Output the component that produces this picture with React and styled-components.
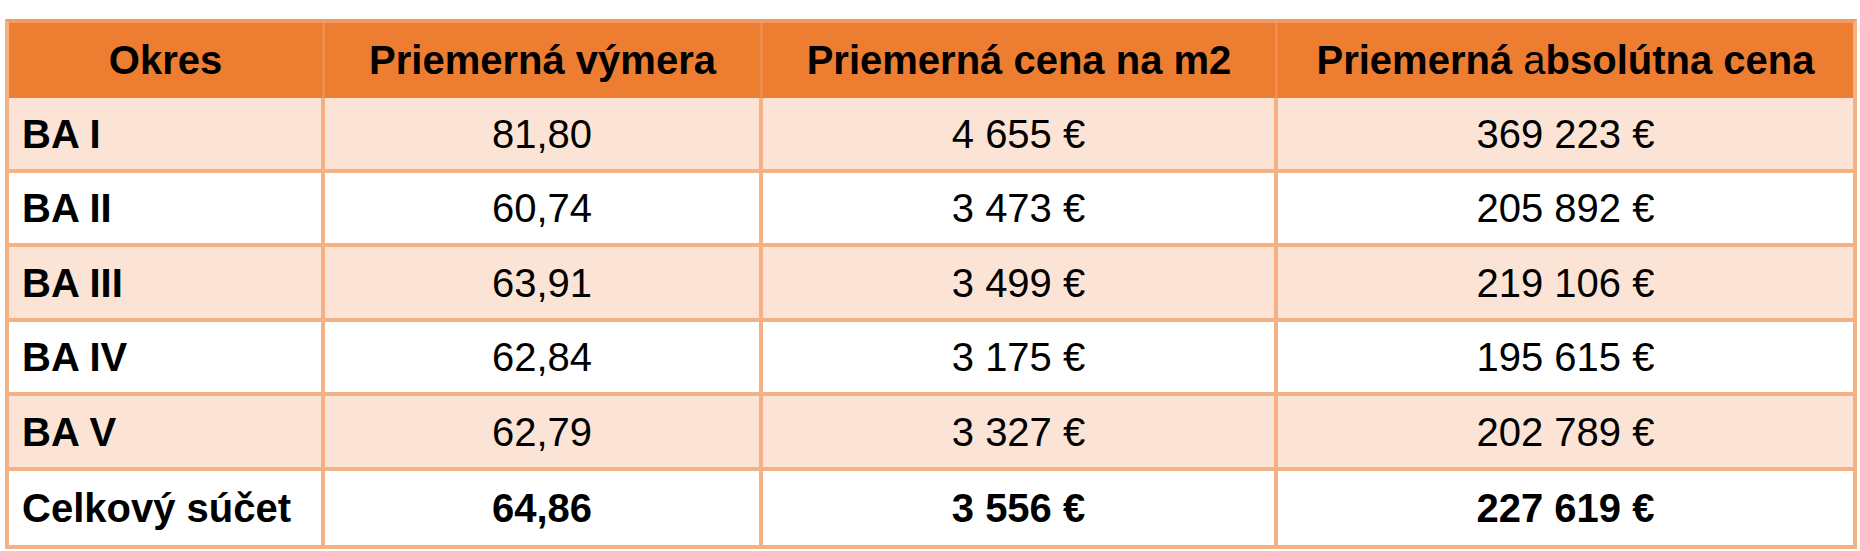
import React from "react";
import styled, { createGlobalStyle } from "styled-components";

const GlobalStyle = createGlobalStyle`
  html, body {
    margin: 0;
    padding: 0;
    background: #fff;
  }
  body {
    font-family: "Liberation Sans", Arial, sans-serif;
    color: #000;
  }
`;

const Page = styled.div`
  padding: 19px 0 0 5px;
`;

const Table = styled.table`
  width: 1852px;
  table-layout: fixed;
  border-collapse: separate;
  border-spacing: 0;
  border: 4px solid #f4b183;
  border-top-color: #f19a62;
  font-size: 40px;
`;

const Col = styled.col`
  width: ${props => props.w}px;
`;

const HeadCell = styled.th`
  height: 75px;
  padding: 0;
  background: #ed7d31;
  font-weight: bold;
  text-align: center;
  vertical-align: middle;
  border-right: 3px solid #f08c4c;
  &:last-child {
    border-right: none;
  }
`;

const Light = styled.span`
  font-weight: normal;
`;

const Row = styled.tr`
  background: ${props => (props.shaded ? "#fbe4d5" : "#fff")};
  font-weight: ${props => (props.total ? "bold" : "normal")};
`;

const Cell = styled.td`
  box-sizing: border-box;
  height: 74.5px;
  padding: 2px 0 0 0;
  text-align: center;
  vertical-align: middle;
  border-right: 4px solid #f4b183;
  border-bottom: 4px solid #f4b183;
  &:last-child {
    border-right: none;
  }
  tr:last-child > & {
    border-bottom: none;
  }
`;

const NameCell = styled(Cell)`
  text-align: left;
  padding-left: 13px;
  font-weight: bold;
`;

const rows = [
  ["BA I", "81,80", "4 655 €", "369 223 €"],
  ["BA II", "60,74", "3 473 €", "205 892 €"],
  ["BA III", "63,91", "3 499 €", "219 106 €"],
  ["BA IV", "62,84", "3 175 €", "195 615 €"],
  ["BA V", "62,79", "3 327 €", "202 789 €"],
];

const total = ["Celkový súčet", "64,86", "3 556 €", "227 619 €"];

export default function App() {
  return (
    <Page>
      <GlobalStyle />
      <Table>
        <colgroup>
          <Col w={316} />
          <Col w={438} />
          <Col w={515} />
          <Col w={575} />
        </colgroup>
        <thead>
          <tr>
            <HeadCell>Okres</HeadCell>
            <HeadCell>Priemerná výmera</HeadCell>
            <HeadCell>Priemerná cena na m2</HeadCell>
            <HeadCell>
              Priemerná <Light>a</Light>bsolútna cena
            </HeadCell>
          </tr>
        </thead>
        <tbody>
          {rows.map((r, i) => (
            <Row key={r[0]} shaded={i % 2 === 0}>
              <NameCell>{r[0]}</NameCell>
              <Cell>{r[1]}</Cell>
              <Cell>{r[2]}</Cell>
              <Cell>{r[3]}</Cell>
            </Row>
          ))}
          <Row total>
            <NameCell>{total[0]}</NameCell>
            <Cell>{total[1]}</Cell>
            <Cell>{total[2]}</Cell>
            <Cell>{total[3]}</Cell>
          </Row>
        </tbody>
      </Table>
    </Page>
  );
}
